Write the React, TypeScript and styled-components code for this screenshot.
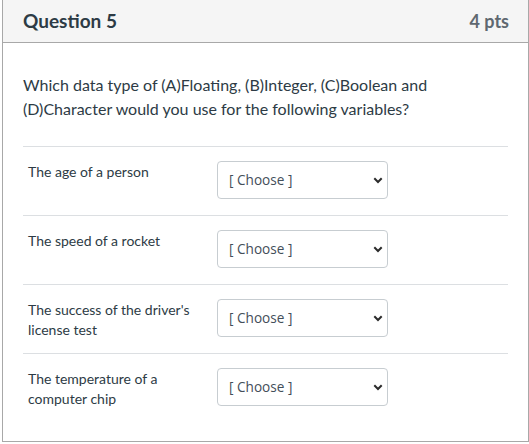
import React from "react";
import styled, { createGlobalStyle } from "styled-components";

const GlobalStyle = createGlobalStyle`
  html, body {
    margin: 0;
    padding: 0;
    background: #ffffff;
  }
  body {
    font-family: Lato, "Open Sans", "Liberation Sans", sans-serif;
    color: #2d3b45;
  }
`;

const Card = styled.div`
  box-sizing: border-box;
  width: 527px;
  margin-left: 2px;
  border: 1px solid #a8a8a8;
  border-top: none;
  background: #ffffff;
`;

const Header = styled.div`
  height: 43px;
  box-sizing: border-box;
  display: flex;
  align-items: center;
  justify-content: space-between;
  padding: 0 19px 1px 20px;
  background: #f5f5f5;
  border-bottom: 1px solid #a8a8a8;
`;

const Title = styled.h2`
  margin: 0;
  font-family: Lato, sans-serif;
  font-size: 19px;
  font-weight: 700;
  color: #2d3b45;
`;

const Points = styled.span`
  font-family: Lato, sans-serif;
  font-size: 18px;
  font-weight: 700;
  color: #5f6870;
`;

const Body = styled.div`
  padding: 30px 20px 19px 20px;
`;

const Prompt = styled.p`
  margin: 0 0 25px 0;
  font-size: 16px;
  line-height: 24px;
  color: #2d3b45;
`;

const Row = styled.div`
  display: flex;
  align-items: flex-start;
  padding: 14px 0 16px 5px;
  border-top: 1px solid #dcdfe2;
`;

const Label = styled.div`
  width: 176px;
  margin: 0 13px -3px 0;
  padding-top: 1px;
  font-size: 14px;
  line-height: 20px;
  color: #2d3b45;
`;

const SelectWrap = styled.div`
  position: relative;
  width: 171px;
  height: 38px;
`;

const Select = styled.select`
  appearance: none;
  -webkit-appearance: none;
  box-sizing: border-box;
  width: 100%;
  height: 100%;
  margin: 0;
  padding: 0 24px 1px 11px;
  border: 1px solid #c7cdd1;
  border-radius: 4px;
  background: #ffffff;
  font-family: "Open Sans", "Noto Sans", sans-serif;
  font-size: 13.6px;
  color: #434e59;
  outline: none;
`;

const Chevron = styled.svg`
  position: absolute;
  right: 5px;
  top: 16px;
  pointer-events: none;
`;

const items = [
  "The age of a person",
  "The speed of a rocket",
  "The success of the driver's license test",
  "The temperature of a computer chip",
];

export default function App() {
  return (
    <>
      <GlobalStyle />
      <Card>
        <Header>
          <Title>Question 5</Title>
          <Points>4 pts</Points>
        </Header>
        <Body>
          <Prompt>
            Which data type of (A)Floating, (B)Integer, (C)Boolean and
            (D)Character would you use for the following variables?
          </Prompt>
          {items.map((text) => (
            <Row key={text}>
              <Label>{text}</Label>
              <SelectWrap>
                <Select defaultValue="">
                  <option value="">[ Choose ]</option>
                  <option value="a">Floating</option>
                  <option value="b">Integer</option>
                  <option value="c">Boolean</option>
                  <option value="d">Character</option>
                </Select>
                <Chevron width="10" height="7" viewBox="0 0 10 7">
                  <path
                    d="M1.3 1.3 L5 5 L8.7 1.3"
                    fill="none"
                    stroke="#2b2b2b"
                    strokeWidth="2"
                  />
                </Chevron>
              </SelectWrap>
            </Row>
          ))}
        </Body>
      </Card>
    </>
  );
}
